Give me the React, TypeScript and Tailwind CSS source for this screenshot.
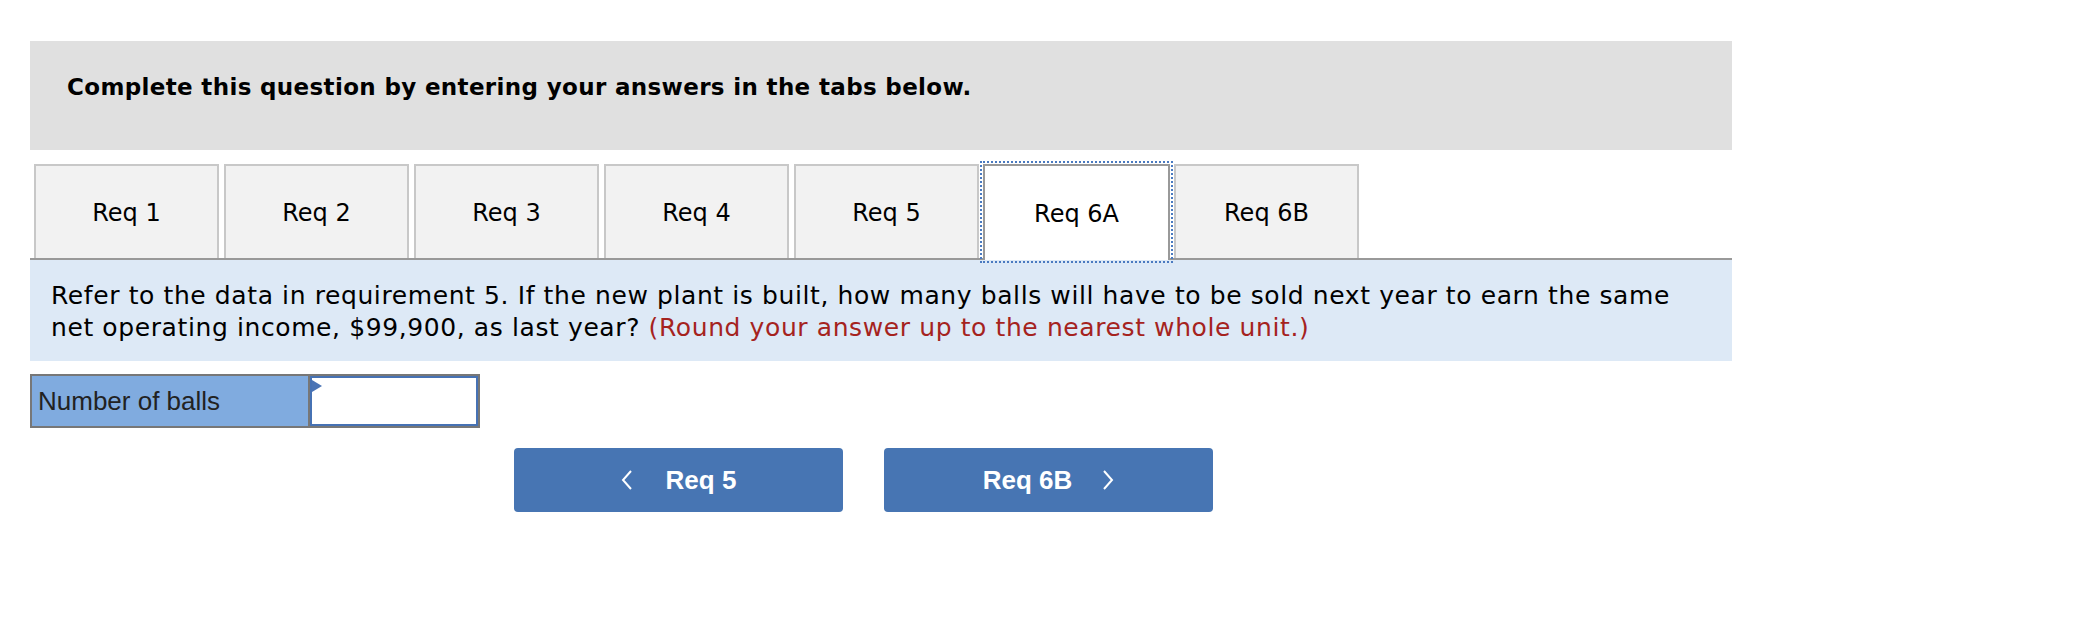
import React from "react";

const tabs = ["Req 1", "Req 2", "Req 3", "Req 4", "Req 5", "Req 6A", "Req 6B"];

export default function App() {
  return (
    <div className="w-[2092px] h-[644px] bg-white pt-[41px] pl-[30px]">
      <div className="w-[1702px]">
        <div className="h-[109px] bg-[#e0e0e0] pl-[37px] pt-[34px]">
          <div className="font-['DejaVu_Sans',sans-serif] font-bold text-[23px] leading-[24px] tracking-[0.35px] text-black">
            Complete this question by entering your answers in the tabs below.
          </div>
        </div>

        <div className="mt-[14px] flex items-start gap-[5px] pl-[4px] border-b-2 border-[#999999]">
          {tabs.map((t) =>
            t === "Req 6A" ? (
              <div
                key={t}
                className="relative z-10 w-[187px] h-[96px] -mb-[2px] -mx-[1px] bg-white border-2 border-b-0 border-[#999999] outline-2 outline-dotted outline-[#4a7ac0] outline-offset-1 flex items-center justify-center pt-[2px] font-['DejaVu_Sans',sans-serif] text-[24px] text-black"
              >
                {t}
              </div>
            ) : (
              <div
                key={t}
                className="w-[185px] h-[94px] bg-[#f2f2f2] border-2 border-b-0 border-[#c8c8c8] flex items-center justify-center pt-[2px] font-['DejaVu_Sans',sans-serif] text-[24px] text-black"
              >
                {t}
              </div>
            )
          )}
        </div>

        <div className="h-[101px] bg-[#dde9f6] pl-[21px] pt-[20px] font-['DejaVu_Sans',sans-serif] text-[25px] leading-[32px] tracking-[0.6px] text-black">
          <p>
            Refer to the data in requirement 5. If the new plant is built, how many balls will have to be sold next year to earn the same
            <br />
            net operating income, $99,900, as last year?{" "}
            <span className="text-[#a5231e]">(Round your answer up to the nearest whole unit.)</span>
          </p>
        </div>

        <div className="mt-[13px] w-[450px] h-[54px] border-2 border-[#777777] flex">
          <div className="w-[278px] bg-[#80abdf] border-r-2 border-[#777777] flex items-center pl-[6px] font-['Liberation_Sans',Arial,sans-serif] text-[26px] text-[#222222]">
            Number of balls
          </div>
          <div className="relative flex-1 bg-white border-2 border-[#4672b4]">
            <svg className="absolute left-0 top-[2px]" width="10" height="12" viewBox="0 0 10 12">
              <polygon points="0,0 10,6 0,12" fill="#4a74b5" />
            </svg>
          </div>
        </div>

        <div className="mt-[20px] ml-[484px] flex gap-[41px]">
          <button className="w-[329px] h-[64px] rounded-[4px] bg-[#4775b3] text-white flex items-center justify-center gap-[33px] font-['Liberation_Sans',Arial,sans-serif] font-bold text-[26px]">
            <svg width="12" height="20" viewBox="0 0 12 20">
              <polyline points="10,1 2,10 10,19" fill="none" stroke="white" strokeWidth="2" />
            </svg>
            <span>Req 5</span>
          </button>
          <button className="w-[329px] h-[64px] rounded-[4px] bg-[#4775b3] text-white flex items-center justify-center gap-[30px] font-['Liberation_Sans',Arial,sans-serif] font-bold text-[26px]">
            <span>Req 6B</span>
            <svg width="12" height="20" viewBox="0 0 12 20">
              <polyline points="2,1 10,10 2,19" fill="none" stroke="white" strokeWidth="2" />
            </svg>
          </button>
        </div>
      </div>
    </div>
  );
}
